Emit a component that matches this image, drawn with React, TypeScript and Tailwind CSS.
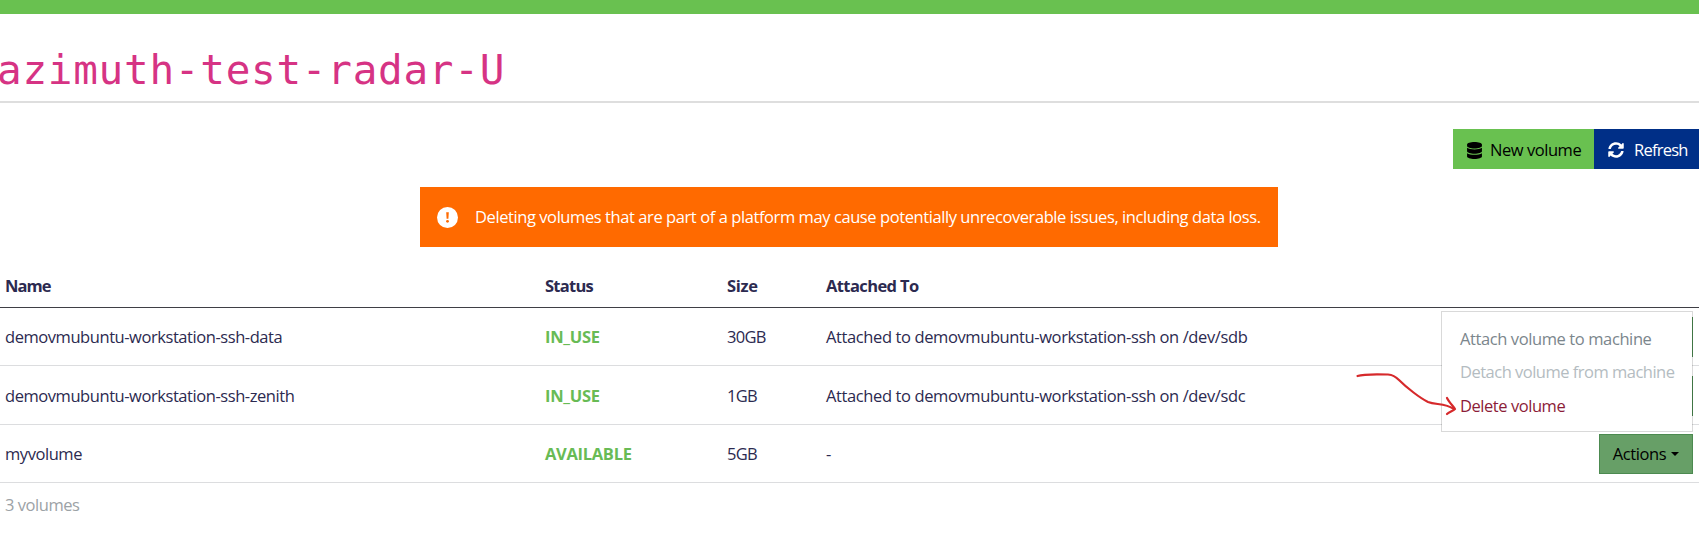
import React from "react";
import { FaDatabase, FaSyncAlt } from "react-icons/fa";

const COLS = "grid grid-cols-[545px_182px_99px_1fr_auto] items-center";

type Volume = { name: string; status: string; size: string; attached: string; rowClass: string; covered: boolean };

const volumes: Volume[] = [
  { name: "demovmubuntu-workstation-ssh-data", status: "IN_USE", size: "30GB", attached: "Attached to demovmubuntu-workstation-ssh on /dev/sdb", rowClass: "h-[58px]", covered: true },
  { name: "demovmubuntu-workstation-ssh-zenith", status: "IN_USE", size: "1GB", attached: "Attached to demovmubuntu-workstation-ssh on /dev/sdc", rowClass: "h-[59px] pt-[2px]", covered: true },
  { name: "myvolume", status: "AVAILABLE", size: "5GB", attached: "-", rowClass: "h-[58px]", covered: false },
];

function AlertIcon() {
  return (
    <svg className="h-[21px] w-[21px] shrink-0" viewBox="0 0 21 21">
      <circle cx="10.500" cy="10.500" r="10.500" fill="#fff" />
      <path d="M9.200 5.300h2.600l-.4 6.400H9.600z" fill="#ff6a00" />
      <circle cx="10.500" cy="14.300" r="1.400" fill="#ff6a00" />
    </svg>
  );
}

function ActionsButton({ covered }: { covered: boolean }) {
  return (
    <button className="mr-[6px] flex h-[40px] w-[94px] items-center justify-center gap-[5px] border border-[#4c8a50] bg-[#679f67] text-black">
      {!covered && (
        <>
          <span className="tracking-[-0.4px]">Actions</span>
          <span className="border-x-[4px] border-t-[4px] border-x-transparent border-t-black" />
        </>
      )}
    </button>
  );
}

function ActionsMenu() {
  return (
    <div className="absolute top-[3px] right-[6px] flex h-[121px] w-[252px] flex-col border border-black/15 bg-white bg-clip-padding pt-[10px] pl-[18px] whitespace-nowrap">
      <div className="h-[33px] leading-[33px] tracking-[-0.4px] text-[#7b868c]">Attach volume to machine</div>
      <div className="h-[34px] leading-[33px] tracking-[-0.51px] text-[#b4bcc1]">Detach volume from machine</div>
      <div className="h-[33px] leading-[33px] tracking-[-0.45px] text-[#8c1c38]">Delete volume</div>
    </div>
  );
}

export default function App() {
  return (
    <div className="h-[549px] w-full overflow-hidden bg-white font-['Open_Sans','Noto_Sans',sans-serif] text-[16.5px] leading-[24px] text-[#2c2a50]">
      <div className="h-[14px] bg-[#69c150]" />
      <h1 className="flex h-[89px] items-end border-b-2 border-[#dedede] pb-[6px] font-['DejaVu_Sans_Mono',monospace] text-[41px] leading-[50px] tracking-[0.72px] whitespace-nowrap text-[#d63384]">
        <span className="-ml-[3px]">azimuth-test-radar-U</span>
      </h1>

      <div className="mt-[26px] flex h-[40px] justify-end">
        <button className="flex w-[141px] items-center gap-[8px] bg-[#69c150] pl-[14px] whitespace-nowrap text-black">
          <FaDatabase className="h-[17px] w-[15px] shrink-0 translate-y-[1px]" />
          <span className="pt-[2px] tracking-[-0.45px]">New volume</span>
        </button>
        <button className="flex w-[105px] items-center gap-[10px] bg-[#002f87] pl-[14px] whitespace-nowrap text-white">
          <FaSyncAlt className="h-[16px] w-[16px] shrink-0 translate-y-[1px]" />
          <span className="pt-[2px] tracking-[-0.75px]">Refresh</span>
        </button>
      </div>

      <div className="mt-[18px] ml-[420px] flex h-[60px] w-[858px] items-center gap-[17px] bg-[#ff6a00] pl-[17px] whitespace-nowrap text-white">
        <AlertIcon />
        <span className="tracking-[-0.42px]">Deleting volumes that are part of a platform may cause potentially unrecoverable issues, including data loss.</span>
      </div>

      <div className="mt-[19px]">
        <div className={`${COLS} h-[42px] border-b border-[#3f3f45] pb-[2px] font-bold`}>
          <span className="pl-[5px] tracking-[-0.95px]">Name</span>
          <span className="tracking-[-0.75px]">Status</span>
          <span className="tracking-[-0.3px]">Size</span>
          <span className="tracking-[-0.6px]">Attached To</span>
        </div>
        <div className="relative">
          {volumes.map((v) => (
            <div key={v.name} className={`${COLS} ${v.rowClass} border-b border-[#dcdddf] whitespace-nowrap`}>
              <span className="pl-[5px] tracking-[-0.44px]">{v.name}</span>
              <span className="font-bold tracking-[-0.3px] text-[#68bb55]">{v.status}</span>
              <span className="tracking-[-0.7px]">{v.size}</span>
              <span className="tracking-[-0.39px]">{v.attached}</span>
              <ActionsButton covered={v.covered} />
            </div>
          ))}
          <ActionsMenu />
          <svg className="absolute top-[58px] left-[1350px]" width="110" height="56" viewBox="0 0 110 56" fill="none" stroke="#d6292b" strokeWidth="2.200" strokeLinecap="round" strokeLinejoin="round">
            <path d="M7.500 10 C12 8.500 23 8 38 8.500 C43 9 45 10 49 14 C57 22 70 32 78 36 C86 39 95 37 104 43" />
            <path d="M97 32 C99 36 103 40 105 43 C103 45 99 46 97 48" />
          </svg>
        </div>
        <div className="mt-[10px] pl-[5px] tracking-[-0.45px] text-[#9ca2a6]">3 volumes</div>
      </div>
    </div>
  );
}
